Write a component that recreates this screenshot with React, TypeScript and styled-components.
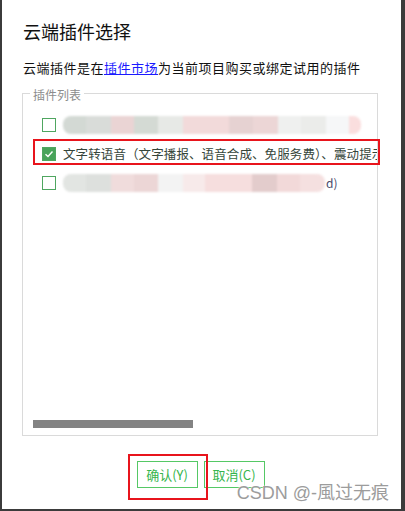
import { createGlobalStyle } from 'styled-components';
import styled from 'styled-components';

const GlobalStyle = createGlobalStyle`
  html, body {
    margin: 0;
    padding: 0;
    background: #3a3a3a;
  }
  * {
    box-sizing: border-box;
  }
`;

const cjk = `"Noto Sans CJK SC", "Noto Sans", sans-serif`;

const Frame = styled.div`
  width: 405px;
  height: 511px;
  display: flex;
  padding: 0 4px 2px 2px;
  background: #3b3b3b;
`;

const Dialog = styled.div`
  position: relative;
  flex: 1;
  min-width: 0;
  display: flex;
  flex-direction: column;
  background: #fff;
  padding: 19px 23px 0 20px;
  font-family: ${cjk};
  color: #111;
`;

const Title = styled.h1`
  margin: 0 0 0 1px;
  font-size: 18px;
  line-height: 24px;
  font-weight: 400;
  color: #111;
`;

const Subtitle = styled.p`
  margin: 16px 0 0 1px;
  font-size: 13px;
  letter-spacing: 0.5px;
  line-height: 18px;
  color: #111;
`;

const Link = styled.a`
  color: #1a1aff;
  text-decoration: underline;
`;

const Fieldset = styled.fieldset`
  margin: 8px 0 0;
  padding: 0;
  width: 100%;
  height: 351px;
  border: 1px solid #dadada;
  min-width: 0;
`;

const Legend = styled.legend`
  margin-left: 7px;
  padding: 3px 3px 0;
  font-size: 12px;
  line-height: 14px;
  color: #8c8c8c;
`;

const List = styled.div`
  width: 100%;
  height: 318px;
  overflow: hidden;
  padding: 8px 0 0 19px;
`;

const Row = styled.div`
  height: 29px;
  display: flex;
  align-items: center;
  gap: 7px;
  white-space: nowrap;
`;

const Check = styled.span<{ $checked?: boolean }>`
  flex: none;
  width: 14px;
  height: 14px;
  border: 1px solid #4fa660;
  background: ${(p) => (p.$checked ? '#48a35a' : '#fff')};
  display: flex;
  align-items: center;
  justify-content: center;
`;

const Label = styled.span`
  flex: none;
  font-size: 12.5px;
  letter-spacing: 0.1px;
  color: #35453a;
`;

const Mosaic = styled.span`
  display: flex;
  height: 18px;
  filter: blur(1.2px);
  border-radius: 8px;
  overflow: hidden;
`;

const Tile = styled.span<{ $c: string; $w: number }>`
  width: ${(p) => p.$w}px;
  background: ${(p) => p.$c};
`;

const Tail = styled.span`
  margin-left: -6px;
  font-size: 12px;
  color: #4a4a6a;
`;

const Track = styled.div`
  padding: 0 0 7px 10px;
`;

const Thumb = styled.div`
  width: 160px;
  height: 8px;
  background: #838383;
`;

const Buttons = styled.div`
  margin-top: 25px;
  display: flex;
  justify-content: center;
  gap: 6px;
  padding-left: 1px;
`;

const Button = styled.button`
  width: 61px;
  height: 27px;
  padding: 0;
  border: 1px solid #55c865;
  background: #fff;
  color: #36b54c;
  font-family: ${cjk};
  font-size: 13px;
  line-height: 25px;
`;

const Annotation = styled.div<{ $x: number; $y: number; $w: number; $h: number }>`
  position: absolute;
  left: ${(p) => p.$x}px;
  top: ${(p) => p.$y}px;
  width: ${(p) => p.$w}px;
  height: ${(p) => p.$h}px;
  border: 2.5px solid #e8141c;
  pointer-events: none;
`;

const Watermark = styled.div`
  position: absolute;
  right: 12px;
  bottom: 5px;
  font-family: "Liberation Sans", "Noto Sans CJK SC", sans-serif;
  font-size: 18px;
  line-height: 22px;
  color: #9c9c9c;
  text-shadow: 0 0 2px #fff, 0 0 1px #fff;
`;

const row1 = [
  ['#d3d9d4', 23], ['#d9dcd9', 25], ['#ead4d4', 23], ['#d4dad4', 24], ['#e7e9e6', 25],
  ['#f2dada', 46], ['#e6d2d2', 24], ['#ecd6d6', 25], ['#eff0ef', 23], ['#ebecea', 25],
  ['#f6f7f8', 23], ['#fadede', 12],
] as const;

const row3 = [
  ['#e2e5e2', 23], ['#dde0dd', 25], ['#f0dcdc', 23], ['#ecd6d6', 24], ['#f3f3f3', 25],
  ['#f7eaea', 22], ['#f6dede', 47], ['#e3cccc', 25], ['#f2d9d9', 23], ['#f5e0e0', 25],
] as const;

function Tick() {
  return (
    <svg width="10" height="8" viewBox="0 0 10 8">
      <path d="M1.5 4.2 L4 6.5 L8.5 1.5" fill="none" stroke="#fff" strokeWidth="1.4" />
    </svg>
  );
}

export default function App() {
  return (
    <>
      <GlobalStyle />
      <Frame>
        <Dialog>
          <Title>云端插件选择</Title>
          <Subtitle>
            云端插件是在<Link>插件市场</Link>为当前项目购买或绑定试用的插件
          </Subtitle>
          <Fieldset>
            <Legend>插件列表</Legend>
            <List>
              <Row>
                <Check />
                <Mosaic>
                  {row1.map(([c, w], i) => (
                    <Tile key={i} $c={c} $w={w} />
                  ))}
                </Mosaic>
              </Row>
              <Row>
                <Check $checked>
                  <Tick />
                </Check>
                <Label>文字转语音（文字播报、语音合成、免服务费）、震动提示</Label>
              </Row>
              <Row>
                <Check />
                <Mosaic>
                  {row3.map(([c, w], i) => (
                    <Tile key={i} $c={c} $w={w} />
                  ))}
                </Mosaic>
                <Tail>d)</Tail>
              </Row>
            </List>
            <Track>
              <Thumb />
            </Track>
          </Fieldset>
          <Buttons>
            <Button>确认(Y)</Button>
            <Button>取消(C)</Button>
          </Buttons>
          <Annotation $x={31} $y={139} $w={347} $h={26} />
          <Annotation $x={126} $y={454} $w={80} $h={46} />
          <Watermark>CSDN @-風过无痕</Watermark>
        </Dialog>
      </Frame>
    </>
  );
}
